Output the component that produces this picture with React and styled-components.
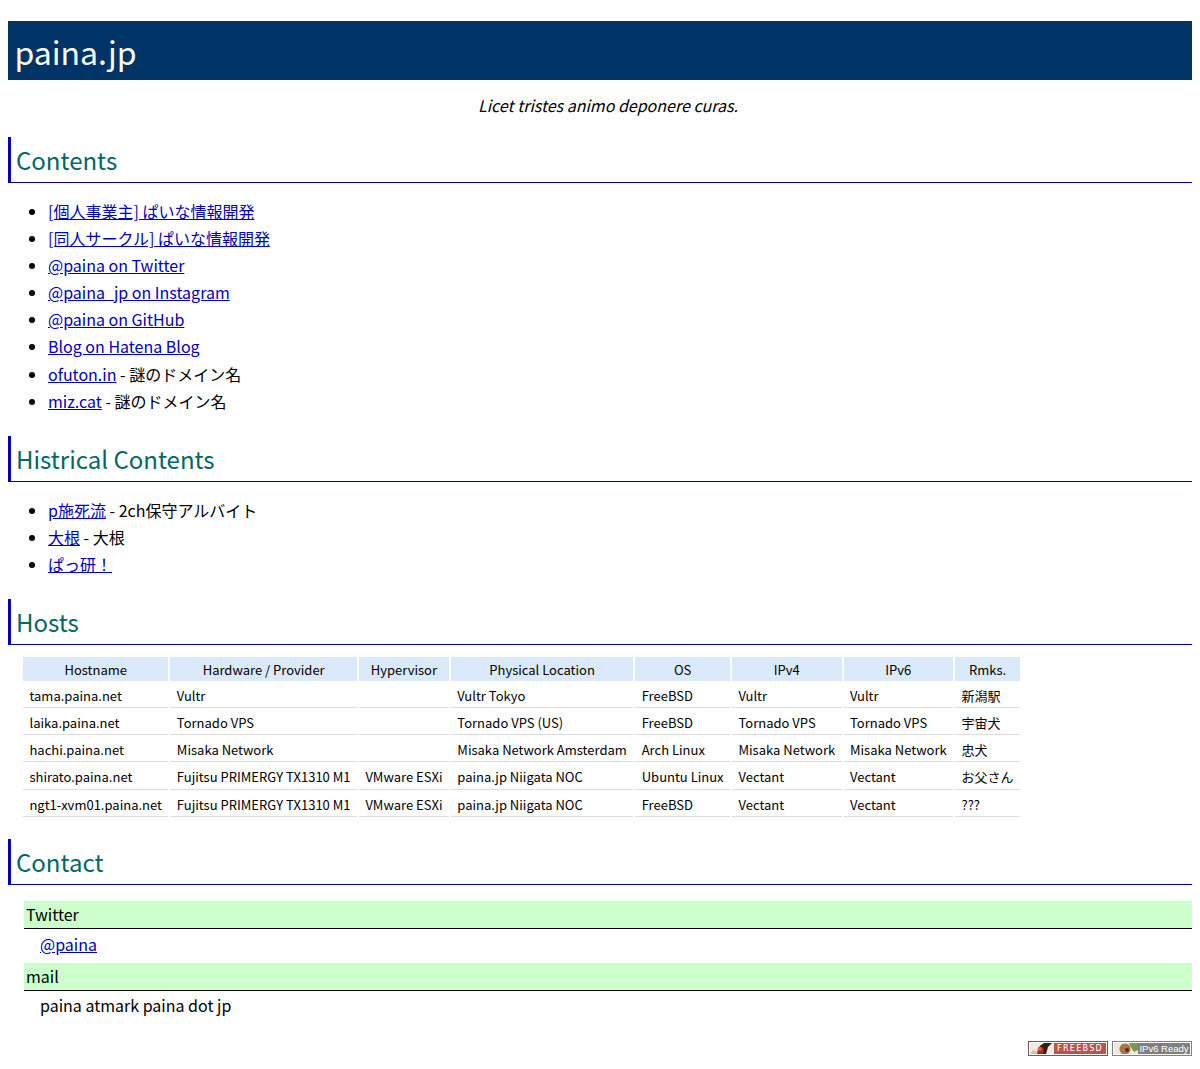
import React from "react";
import styled, { createGlobalStyle } from "styled-components";

const GlobalStyle = createGlobalStyle`
  body {
    margin: 8px;
    background: #fff;
    color: #000;
    font-family: "Noto Sans CJK JP", "Noto Sans", sans-serif;
    font-size: 16px;
    line-height: 1.7;
  }
  a {
    color: #0000bb;
  }
`;

const Title = styled.h1`
  margin: 13px 0 0;
  height: 59px;
  padding-left: 6.4px;
  background: #003366;
  color: #fff;
  font-size: 32px;
  font-weight: 400;
  line-height: 60px;
`;

const Motto = styled.p`
  margin: 0;
  height: 57px;
  padding-left: 16px;
  font-style: italic;
  text-align: center;
  line-height: 50px;
`;

const Heading = styled.h2`
  margin: 0;
  height: 45px;
  padding-left: 5px;
  border-left: 3px solid #0000bb;
  border-bottom: 1px solid #000099;
  color: #006666;
  font-size: 24px;
  font-weight: 400;
  line-height: 46px;
`;

const List = styled.ul`
  margin: 14.97px 0 21px;
  padding-left: 40px;
  line-height: 27.1px;
`;

const HostTable = styled.table`
  margin: 9.7px 0 20.1px 13px;
  border-spacing: 2px;
  font-size: 13px;
`;

const Th = styled.th`
  padding: 2px 6.45px 0.1px;
  background: #dbeafa;
  font-weight: 400;
`;

const Td = styled.td`
  padding: 2px 6.45px 0.1px;
  border-bottom: 1px solid #dddddd;
  white-space: nowrap;
`;

const ContactList = styled.dl`
  margin: 16px 0 16.6px 16px;
`;

const Term = styled.dt`
  padding-left: 2px;
  background: #ccffcc;
  border-bottom: 1px solid #000;
`;

const Detail = styled.dd`
  margin: 0 0 0 16px;
  padding: 1.6px 0 4.8px;
`;

const Badges = styled.div`
  display: flex;
  justify-content: flex-end;
  gap: 4px;
`;

const Badge = styled.div`
  display: flex;
  width: 80px;
  height: 15px;
  box-sizing: border-box;
  padding: 1px;
  border: 1px solid ${(p) => p.$edge};
  background: #fff;
`;

const BadgeLabel = styled.span`
  flex: 1;
  background: ${(p) => p.$bg};
  color: #fff;
  font-family: ${(p) => p.$font}, sans-serif;
  font-size: ${(p) => p.$size}px;
  letter-spacing: ${(p) => p.$track}px;
  line-height: 11px;
  text-align: center;
  white-space: nowrap;
  overflow: hidden;
`;

const columns = [
  "Hostname",
  "Hardware / Provider",
  "Hypervisor",
  "Physical Location",
  "OS",
  "IPv4",
  "IPv6",
  "Rmks.",
];

const hosts = [
  ["tama.paina.net", "Vultr", "", "Vultr Tokyo", "FreeBSD", "Vultr", "Vultr", "新潟駅"],
  ["laika.paina.net", "Tornado VPS", "", "Tornado VPS (US)", "FreeBSD", "Tornado VPS", "Tornado VPS", "宇宙犬"],
  ["hachi.paina.net", "Misaka Network", "", "Misaka Network Amsterdam", "Arch Linux", "Misaka Network", "Misaka Network", "忠犬"],
  ["shirato.paina.net", "Fujitsu PRIMERGY TX1310 M1", "VMware ESXi", "paina.jp Niigata NOC", "Ubuntu Linux", "Vectant", "Vectant", "お父さん"],
  ["ngt1-xvm01.paina.net", "Fujitsu PRIMERGY TX1310 M1", "VMware ESXi", "paina.jp Niigata NOC", "FreeBSD", "Vectant", "Vectant", "???"],
];

const App = () => {
  return (
    <>
      <GlobalStyle />
      <Title>paina.jp</Title>
      <Motto>Licet tristes animo deponere curas.</Motto>

      <Heading>Contents</Heading>
      <List>
        <li><a href="#a">[個人事業主] ぱいな情報開発</a></li>
        <li><a href="#a">[同人サークル] ぱいな情報開発</a></li>
        <li><a href="#a">@paina on Twitter</a></li>
        <li><a href="#a">@paina_jp on Instagram</a></li>
        <li><a href="#a">@paina on GitHub</a></li>
        <li><a href="#a">Blog on Hatena Blog</a></li>
        <li><a href="#a">ofuton.in</a> - 謎のドメイン名</li>
        <li><a href="#a">miz.cat</a> - 謎のドメイン名</li>
      </List>

      <Heading>Histrical Contents</Heading>
      <List>
        <li><a href="#a">p施死流</a> - 2ch保守アルバイト</li>
        <li><a href="#a">大根</a> - 大根</li>
        <li><a href="#a">ぱっ研！</a></li>
      </List>

      <Heading>Hosts</Heading>
      <HostTable>
        <thead>
          <tr>
            {columns.map((c) => (
              <Th key={c}>{c}</Th>
            ))}
          </tr>
        </thead>
        <tbody>
          {hosts.map((row) => (
            <tr key={row[0]}>
              {row.map((cell, i) => (
                <Td key={i}>{cell}</Td>
              ))}
            </tr>
          ))}
        </tbody>
      </HostTable>

      <Heading>Contact</Heading>
      <ContactList>
        <Term>Twitter</Term>
        <Detail><a href="#a">@paina</a></Detail>
        <Term>mail</Term>
        <Detail>paina atmark paina dot jp</Detail>
      </ContactList>

      <Badges>
        <Badge $edge="#6e5a55">
          <svg width="24" height="11" viewBox="0 0 24 11">
            <rect width="24" height="11" fill="#f3e9e2" />
            <path d="M0 11 L3 7 L7 9 L9 11 Z" fill="#d9b9a8" />
            <path d="M7 11 L8 5 L11 2 L14 4 L15 8 L13 11 Z" fill="#a52a18" />
            <path d="M10 3 L14 0 L22 0 L18 4 L16 11 L13 11 L14 6 Z" fill="#3c1a14" />
            <circle cx="10" cy="6" r="2" fill="#d8604a" />
          </svg>
          <BadgeLabel $bg="#b5564c" $font='"DejaVu Sans"' $size={8} $track={1.3}>FREEBSD</BadgeLabel>
        </Badge>
        <Badge $edge="#808080">
          <svg width="24" height="11" viewBox="0 0 24 11">
            <rect width="24" height="11" fill="#ece8da" />
            <circle cx="11" cy="6" r="5.5" fill="#a8744a" />
            <circle cx="13" cy="7" r="2" fill="#54301c" />
            <path d="M15 0 H24 V7 L20 9 L16 3 Z" fill="#7f9a46" />
          </svg>
          <BadgeLabel $bg="#808080" $font='"Liberation Sans"' $size={9.5} $track={0}>IPv6 Ready</BadgeLabel>
        </Badge>
      </Badges>
    </>
  );
};

export default App;
